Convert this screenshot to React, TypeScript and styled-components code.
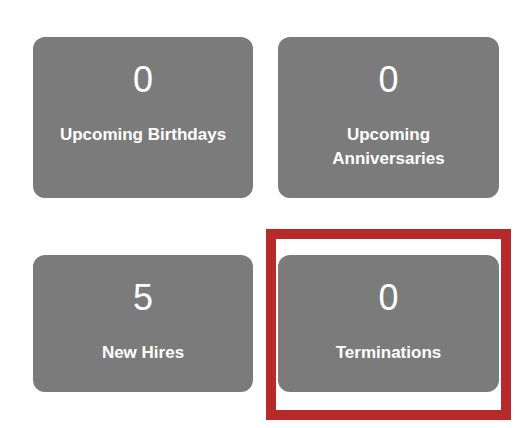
import React from "react";
import styled, { createGlobalStyle } from "styled-components";

const GlobalStyle = createGlobalStyle`
  html, body {
    margin: 0;
    padding: 0;
    background: #ffffff;
    font-family: "Liberation Sans", Arial, sans-serif;
  }
`;

const Page = styled.div`
  padding: 37px 0 37px 33px;
`;

const Grid = styled.div`
  display: grid;
  grid-template-columns: 220px 221px;
  column-gap: 25px;
  row-gap: 57px;
`;

const CardWrap = styled.div`
  position: relative;
  display: flex;
`;

const Card = styled.div`
  flex: 1;
  display: flex;
  flex-direction: column;
  align-items: center;
  background: #7b7b7b;
  border-radius: 12px;
  padding: 23px 20px 27px;
  color: #ffffff;
  text-align: center;
`;

const Count = styled.div`
  font-size: 36px;
  line-height: 40px;
  font-weight: 400;
`;

const Title = styled.div`
  margin-top: 23px;
  font-size: 17px;
  line-height: 24px;
  font-weight: 700;
`;

const Highlight = styled.div`
  position: absolute;
  top: -26px;
  left: -12px;
  right: -12px;
  bottom: -28px;
  border: 10px solid #b8292b;
  pointer-events: none;
`;

type Stat = { count: number; title: string; highlighted?: boolean };

const stats: Stat[] = [
  { count: 0, title: "Upcoming Birthdays" },
  { count: 0, title: "Upcoming Anniversaries" },
  { count: 5, title: "New Hires" },
  { count: 0, title: "Terminations", highlighted: true },
];

export default function App() {
  return (
    <>
      <GlobalStyle />
      <Page>
        <Grid>
          {stats.map((s) => (
            <CardWrap key={s.title}>
              <Card>
                <Count>{s.count}</Count>
                <Title>{s.title}</Title>
              </Card>
              {s.highlighted && <Highlight />}
            </CardWrap>
          ))}
        </Grid>
      </Page>
    </>
  );
}
